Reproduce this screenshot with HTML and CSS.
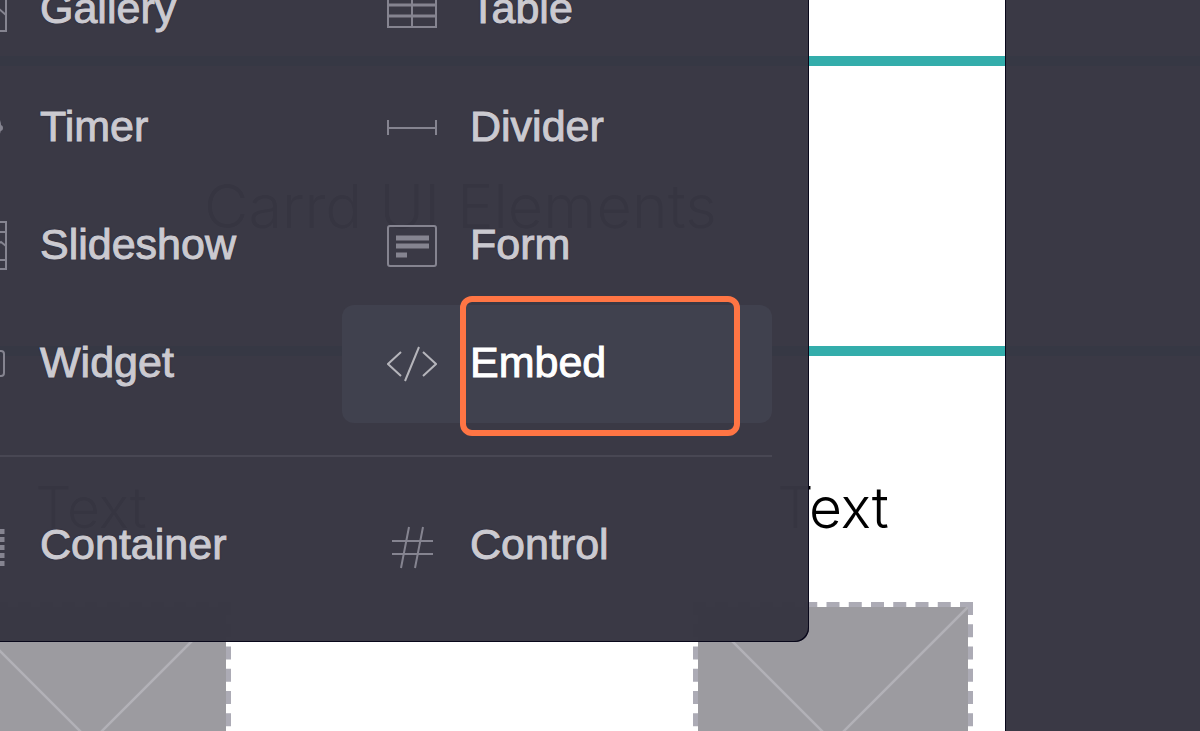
FILE: index.html
```
<!doctype html>
<html lang="en">

<head>
    <meta charset="utf-8">
    <title>Carrd UI Elements</title>
    <link rel="stylesheet" href="styles.css">
</head>
<body>
    <main class="canvas">
        <section class="hero">
            <h1>Carrd UI Elements</h1>
        </section>
        <section class="columns">
            <div class="column">
                <h2>Text</h2>
                <svg class="placeholder" viewBox="0 0 280 280">
                    <rect x="5" y="5" width="270" height="270" fill="#9c9ba0"/>
                    <path d="M5 5l270 270M275 5L5 275" stroke="#b2b1b7" stroke-width="2.5"/>
                    <path d="M0 2.5h280M0 277.5h280M2.5 0v280M277.5 0v280" stroke="#acabb5" stroke-width="5" stroke-dasharray="13 9.25"/>
                </svg>
            </div>
            <div class="column">
                <h2>Text</h2>
                <svg class="placeholder" viewBox="0 0 280 280">
                    <rect x="5" y="5" width="270" height="270" fill="#9c9ba0"/>
                    <path d="M5 5l270 270M275 5L5 275" stroke="#b2b1b7" stroke-width="2.5"/>
                    <path d="M0 2.5h280M0 277.5h280M2.5 0v280M277.5 0v280" stroke="#acabb5" stroke-width="5" stroke-dasharray="13 9.25"/>
                </svg>
            </div>
        </section>
    </main>

    <aside class="panel"></aside>

    <nav class="menu">
        <div class="group">
            <button class="item">
                <svg class="icon" viewBox="0 0 50 50"><path d="M1 6h48v41H1zM1 36l14-14 14 14M33 34l8-10 8 7"/></svg>
                Gallery
            </button>
            <button class="item">
                <svg class="icon" viewBox="0 0 50 50"><path d="M1 4h48v39H1zM25 4v39"/><path d="M1 21h48M1 32h48" stroke-width="3"/></svg>
                Table
            </button>
            <button class="item">
                <svg class="icon" viewBox="0 0 50 50"><path d="M24 6a19 19 0 1 0 14 6M24 6v20"/><circle cx="43" cy="26" r="2" fill="#858490"/></svg>
                Timer
            </button>
            <button class="item">
                <svg class="icon" viewBox="0 0 50 50"><path d="M1 18v15M49 18v15M1 26h48"/></svg>
                Divider
            </button>
            <button class="item">
                <svg class="icon" viewBox="0 0 50 50"><path d="M1 2h48v47H1zM1 12h48M1 40h48M7 34l14-12 14 12M38 26l6-4 5 4"/></svg>
                Slideshow
            </button>
            <button class="item">
                <svg class="icon" viewBox="0 0 50 50"><rect x="1" y="6" width="48" height="40" rx="2"/><path d="M9 18h33M9 26h33M9 35h11" stroke-width="5"/></svg>
                Form
            </button>
            <button class="item">
                <svg class="icon" viewBox="0 0 50 50"><rect x="5" y="13" width="42" height="25" rx="3"/></svg>
                Widget
            </button>
            <button class="item active">
                <svg class="icon" viewBox="0 0 50 50"><path d="M14 14L1 26l13 12M36 14l13 12-13 12M32 9L18 43"/></svg>
                Embed
                <span class="marker"></span>
            </button>
        </div>
        <hr class="rule">
        <div class="group">
            <button class="item">
                <svg class="icon" viewBox="0 0 50 50"><path d="M5 9v38M45 9v38" stroke-width="5" stroke-dasharray="5 3"/></svg>
                Container
            </button>
            <button class="item">
                <svg class="icon" viewBox="0 0 50 50"><path d="M5 21h41M5 34h41M22 7l-8 41M36 7l-8 41"/></svg>
                Control
            </button>
        </div>
    </nav>
</body>

</html>
```
FILE: styles.css
```
* {
    box-sizing: border-box;
    margin: 0;
}

body {
    position: relative;
    height: 100vh;
    overflow: hidden;
    background: #fff;
    color: #000;
    font-family: Inter, "Open Sans", sans-serif;
}

.canvas {
    height: 100%;
    overflow: hidden;
    padding-top: 56px;
}

.hero {
    display: flex;
    align-items: center;
    height: 300px;
    padding-left: 204px;
    border-top: 10px solid #33adab;
    border-bottom: 10px solid #33adab;
}

h1,
h2 {
    font-size: 57px;
    font-weight: 300;
    line-height: 80px;
}

h1 {
    font-size: 61px;
}

.columns {
    display: flex;
    gap: 462px;
    margin-left: -49px;
    padding-top: 112px;
}

.column {
    display: flex;
    flex-direction: column;
    align-items: center;
    gap: 54px;
    flex: 0 0 280px;
}

.placeholder {
    display: block;
    width: 280px;
    height: 280px;
}

/* right hand panel, lies over the canvas */
.panel {
    position: absolute;
    top: 0;
    right: 0;
    bottom: 0;
    width: 195px;
    background: rgba(55, 54, 66, 0.985);
    border-left: 1px solid #08071a;
}

/* element menu */
.menu {
    position: absolute;
    top: -85px;
    left: -124px;
    padding: 36px 37px 37px 36px;
    background: rgba(55, 54, 66, 0.985);
    border-radius: 0 0 14px 0;
    box-shadow: inset -1px -1px 0 #08071a;
}

.group {
    display: grid;
    grid-template-columns: 430px 430px;
}

.item {
    position: relative;
    display: flex;
    align-items: center;
    gap: 33px;
    height: 118px;
    padding: 0 0 3px 45px;
    border: none;
    border-radius: 12px;
    background: none;
    color: #cbcad0;
    font-family: "Liberation Sans", Arial, sans-serif;
    font-size: 43px;
    text-align: left;
    text-shadow: 0 0 2px #1c1b34;
    -webkit-text-stroke: 1px currentColor;
    cursor: pointer;
}

.item.active {
    background: #40414e;
    color: #fff;
}

.icon {
    flex: none;
    width: 50px;
    height: 50px;
    fill: none;
    stroke: #858490;
    stroke-width: 2;
}

.active .icon {
    stroke: #b5b5bb;
}

.rule {
    height: 2px;
    margin: 32px 0 30px;
    border: none;
    background: #484753;
}

.marker {
    position: absolute;
    top: -9px;
    right: 32px;
    width: 280px;
    height: 140px;
    border: 6px solid #ff7544;
    border-radius: 12px;
}
```
